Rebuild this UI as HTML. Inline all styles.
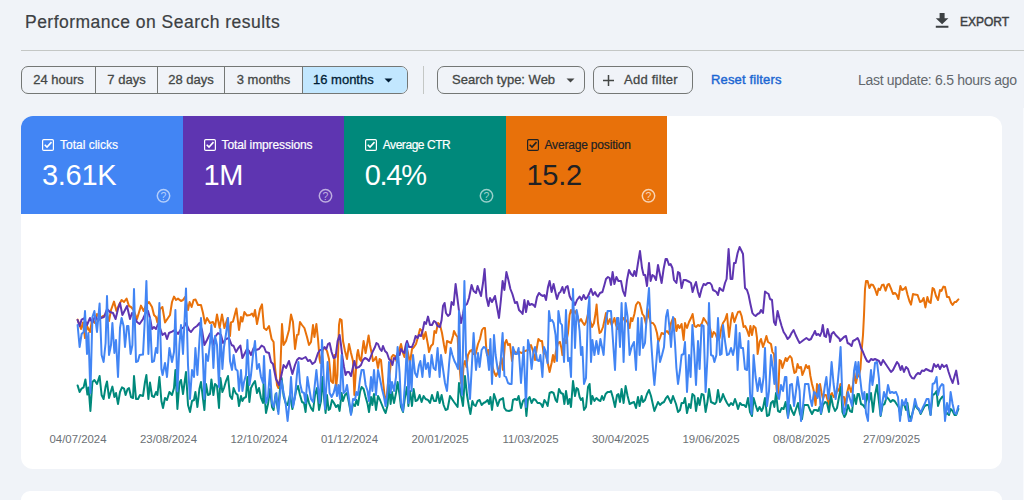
<!DOCTYPE html>
<html>
<head>
<meta charset="utf-8">
<title>Performance on Search results</title>
<style>
  html, body { margin: 0; padding: 0; }
  html { overflow: hidden; }
  body {
    width: 1024px; height: 500px; overflow: hidden; position: relative;
    background: #f0f3f8;
    font-family: "Liberation Sans", sans-serif;
    color: #3c4043;
  }
  .abs { position: absolute; white-space: nowrap; }
  #title { left: 25px; top: 11px; font-size: 17.5px; line-height: 22px; color: #3c4043; letter-spacing: 0.48px; -webkit-text-stroke: 0.2px #3c4043; }
  #export { left: 960px; top: 14px; font-size: 12px; line-height: 16px; color: #3c4043; -webkit-text-stroke: 0.45px #3c4043; letter-spacing: 0; }
  #exportIcon { left: 933px; top: 11px; }
  #divider { left: 21px; top: 50px; width: 1003px; height: 1px; background: #c4c7c5; }

  #seg { left: 21px; top: 66px; width: 387px; height: 28px; box-sizing: border-box;
         border: 1px solid #747775; border-radius: 7px; overflow: hidden; }
  #seg div { position: absolute; top: 0; height: 26px; line-height: 25px; font-size: 13px; color: #444746;
             text-align: center; border-left: 1px solid #747775; box-sizing: border-box; -webkit-text-stroke: 0.3px currentColor; }
  #seg div:first-child { border-left: none; }
  #seg .on { background: #c2e7ff; color: #001d35; }

  #vsep { left: 423px; top: 66px; width: 1px; height: 28px; background: #c4c7c5; }
  .chip { box-sizing: border-box; height: 28px; top: 66px; border: 1px solid #747775; border-radius: 7px;
          font-size: 13px; line-height: 25px; color: #444746; -webkit-text-stroke: 0.3px currentColor; }
  #reset { left: 711px; top: 72px; font-size: 13px; line-height: 16px; color: #1b66d2; -webkit-text-stroke: 0.4px #1b66d2; letter-spacing: 0.15px;}
  #last { left: 858px; top: 72px; font-size: 14px; line-height: 16px; color: #63686d; letter-spacing: -0.3px; }

  #card { left: 21px; top: 116px; width: 981px; height: 353px; background: #fff; border-radius: 12px; overflow: hidden; }
  #card2 { left: 21px; top: 491px; width: 981px; height: 9px; background: #fff; border-radius: 12px 12px 0 0; }
  .stat { position: absolute; top: 0; height: 98px; color: #fff; }
  .stat .cb { position: absolute; left: 21px; top: 23px; }
  .stat .lbl { position: absolute; left: 39px; top: 21px; font-size: 12px; line-height: 16px; white-space: nowrap; letter-spacing: 0; -webkit-text-stroke: 0.2px currentColor; }
  .stat .val { position: absolute; left: 21px; top: 42px; font-size: 29px; line-height: 34px; white-space: nowrap; letter-spacing: -0.3px; }
  .stat .help { position: absolute; left: 135px; top: 72px; }
  .xl { position: absolute; top: 432px; width: 80px; margin-left: -40px; text-align: center; font-size: 11.4px; line-height: 14px; color: #6b7075; white-space: nowrap; }
</style>
</head>
<body>
  <div id="title" class="abs">Performance on Search results</div>
  <svg id="exportIcon" class="abs" width="18" height="20" viewBox="0 0 18 20">
    <path d="M6.6 2.1h5v5.1h3.8l-6.3 6.1-6.3-6.1h3.8z M2.8 14.8h12.6v2H2.8z" fill="#3c4043"/>
  </svg>
  <div id="export" class="abs">EXPORT</div>
  <div id="divider" class="abs"></div>

  <div id="seg" class="abs">
    <div style="left:0;width:73px">24 hours</div>
    <div style="left:73px;width:62px">7 days</div>
    <div style="left:135px;width:67px">28 days</div>
    <div style="left:202px;width:78px">3 months</div>
    <div class="on" style="left:280px;width:105px;text-align:left;padding-left:10px">16 months
      <svg style="position:absolute;left:81px;top:11px" width="9" height="5" viewBox="0 0 9 5"><path d="M0.5 0.5h8l-4 4z" fill="#001d35"/></svg>
    </div>
  </div>
  <div id="vsep" class="abs"></div>

  <div class="abs chip" style="left:437px;width:148px;padding-left:14px">Search type: Web
    <svg style="position:absolute;left:128px;top:11px" width="9" height="5" viewBox="0 0 9 5"><path d="M0.5 0.5h8l-4 4z" fill="#444746"/></svg>
  </div>
  <div class="abs chip" style="left:593px;width:100px;padding-left:30px;letter-spacing:0.25px">Add filter
    <svg style="position:absolute;left:8px;top:7px" width="13" height="13" viewBox="0 0 13 13"><path d="M6.5 1v11M1 6.5h11" stroke="#444746" stroke-width="1.5" fill="none"/></svg>
  </div>
  <div id="reset" class="abs">Reset filters</div>
  <div id="last" class="abs">Last update: 6.5 hours ago</div>

  <div id="card" class="abs">
    <div class="stat" style="left:0;width:161.5px;background:#4285f4">
      <svg class="cb" width="12" height="12" viewBox="0 0 12 12"><rect x="0.6" y="0.6" width="10.8" height="10.8" rx="1.2" fill="none" stroke="#fff" stroke-width="1.2"/><path d="M2.7 5.7l2.3 2.3 4.5-4.9" fill="none" stroke="#fff" stroke-width="1.6"/></svg>
      <div class="lbl">Total clicks</div>
      <div class="val">3.61K</div>
      <svg class="help" width="15" height="15" viewBox="0 0 15 15"><circle cx="7.5" cy="7.8" r="6.2" fill="none" stroke="#fff" stroke-opacity="0.6" stroke-width="1.5"/><text x="7.5" y="11.6" font-size="10.5" font-family="Liberation Sans, sans-serif" text-anchor="middle" fill="#fff" fill-opacity="0.6">?</text></svg>
    </div>
    <div class="stat" style="left:161.5px;width:161.5px;background:#5e35b1">
      <svg class="cb" width="12" height="12" viewBox="0 0 12 12"><rect x="0.6" y="0.6" width="10.8" height="10.8" rx="1.2" fill="none" stroke="#fff" stroke-width="1.2"/><path d="M2.7 5.7l2.3 2.3 4.5-4.9" fill="none" stroke="#fff" stroke-width="1.6"/></svg>
      <div class="lbl" style="letter-spacing:-0.1px">Total impressions</div>
      <div class="val">1M</div>
      <svg class="help" width="15" height="15" viewBox="0 0 15 15"><circle cx="7.5" cy="7.8" r="6.2" fill="none" stroke="#fff" stroke-opacity="0.6" stroke-width="1.5"/><text x="7.5" y="11.6" font-size="10.5" font-family="Liberation Sans, sans-serif" text-anchor="middle" fill="#fff" fill-opacity="0.6">?</text></svg>
    </div>
    <div class="stat" style="left:322.75px;width:162px;background:#00897b">
      <svg class="cb" width="12" height="12" viewBox="0 0 12 12"><rect x="0.6" y="0.6" width="10.8" height="10.8" rx="1.2" fill="none" stroke="#fff" stroke-width="1.2"/><path d="M2.7 5.7l2.3 2.3 4.5-4.9" fill="none" stroke="#fff" stroke-width="1.6"/></svg>
      <div class="lbl" style="letter-spacing:-0.45px">Average CTR</div>
      <div class="val" style="letter-spacing:-1.3px">0.4%</div>
      <svg class="help" width="15" height="15" viewBox="0 0 15 15"><circle cx="7.5" cy="7.8" r="6.2" fill="none" stroke="#fff" stroke-opacity="0.6" stroke-width="1.5"/><text x="7.5" y="11.6" font-size="10.5" font-family="Liberation Sans, sans-serif" text-anchor="middle" fill="#fff" fill-opacity="0.6">?</text></svg>
    </div>
    <div class="stat" style="left:484.5px;width:161.5px;background:#e8710a;color:#202124">
      <svg class="cb" width="12" height="12" viewBox="0 0 12 12"><rect x="0.6" y="0.6" width="10.8" height="10.8" rx="1.2" fill="none" stroke="#202124" stroke-width="1.2"/><path d="M2.7 5.7l2.3 2.3 4.5-4.9" fill="none" stroke="#202124" stroke-width="1.6"/></svg>
      <div class="lbl" style="letter-spacing:-0.18px">Average position</div>
      <div class="val">15.2</div>
      <svg class="help" width="15" height="15" viewBox="0 0 15 15"><circle cx="7.5" cy="7.8" r="6.2" fill="none" stroke="#fff" stroke-opacity="0.7" stroke-width="1.5"/><text x="7.5" y="11.6" font-size="10.5" font-family="Liberation Sans, sans-serif" text-anchor="middle" fill="#fff" fill-opacity="0.7">?</text></svg>
    </div>
  </div>

  <!-- chart overlay in page coordinates -->
  <svg id="chart" class="abs" style="left:0;top:0" width="1024" height="500" viewBox="0 0 1024 500" fill="none" stroke-width="2" stroke-linejoin="round" stroke-linecap="round">
    <!--CURVES-->
    <path d="M77.6 319.6 L81 329 L83 322.4 L85 338 L87 326 L90 332 L92 320 L95 323 L97 314 L100 318 L103 316 L107 315 L109 321 L111 310 L114 301.6 L116.4 311 L119 305 L121.6 300 L124 302 L126.6 298.6 L129 306 L131 307 L133.6 310 L137 319 L141 305.6 L143.6 311 L146 305 L149 302 L152 307 L154 315 L156 317 L157.4 322.4 L160 309 L162.4 307 L165 322.4 L168 318 L170 315 L172 302 L174 296.6 L176 300 L178 298.6 L181 301 L183 300 L185 297 L188 310 L189.6 302 L191.6 307 L193.6 300 L195.6 299.6 L198 305 L201 305 L203 313 L205 323.6 L207 318 L210 323 L213 322 L215 327 L217 314.4 L219.6 328 L222 314.4 L224.4 328 L227.6 318 L230 336 L231 322.4 L233 321.6 L236.4 308.4 L239 330 L241 317 L242.4 321.6 L244.4 312 L247 315.6 L250 315 L252 313.6 L253.6 316.4 L255 310 L257 324 L260 309 L262 304.4 L264 328 L266.4 330 L269 326 L271.6 339 L273.6 342 L275 367 L277 385 L278.4 388 L280 379 L282 324 L283.6 345 L286 341 L289 330 L291 314.6 L293 322 L295 349 L297 335 L298.4 334.6 L300 322 L302 325 L304.4 328 L307 337 L309 345 L311 342 L313 325 L314.4 337 L316.4 324 L318 339 L319.6 359 L320.4 363 L323 349 L325 348 L327 351 L329 359 L331 381 L333 383 L334.4 355 L336 389 L337.4 375 L339 325 L340 319 L341.6 320 L343 341 L345 351 L347 359 L349 344 L351 353 L353 361 L354.4 395 L355.6 375 L357 355 L358 350 L359.6 359 L361 361 L363.6 341 L365.6 353 L367 345 L368.6 335.4 L370 345 L371.6 353 L373 361 L375 359 L376 357 L378 368 L379.6 359 L381 360 L383 381 L385 399 L386.4 400 L388 383 L390 371 L391.6 357 L393 355 L395 356 L396.4 361 L398 354 L401 344 L403 353 L404.4 357 L406 345 L408 353 L410 363 L412 349 L414 347 L416 344 L418 337 L420 329 L422 331 L423.6 339 L425.6 332 L428 345 L429 352 L431 346 L433 344 L434.4 331 L436 333 L438 323 L440 325 L442 333 L444 345 L445.6 353 L447 341 L449 342 L451 343 L453 336 L454 331 L456 335 L457.6 337 L459 361 L461 383 L462.4 385 L463.6 365 L465 361 L466.4 367 L468 355 L470 351 L472 350 L473 354 L475.6 354 L478 344 L480 339 L482 330 L483.6 328 L485 328 L486 345 L487 355 L488.4 350 L490 361 L492 365 L494 372 L496 376 L498 372 L500 365 L501.6 358 L503 370 L505 343 L506.4 340 L508 345 L510 344 L512 361 L513.6 350 L516 353 L519 352 L522 353 L525 351 L528 350 L531 345 L533 351 L535 360 L537 347 L538.4 339 L540.4 341 L542 341 L543.6 353 L545.6 354 L547.6 362 L549.6 372 L551.6 363 L553 355 L554.4 362 L556 351 L558 343 L560 342 L561.6 349 L562.4 355 L564 339 L566 343 L568 333 L569.6 315 L571 310 L573 314 L575 311 L577 315 L579 322 L581 319 L582.4 322 L584.4 325 L586 322 L588 314 L590 320 L592 327 L594 323 L595.6 313 L596.6 304.6 L598 323 L599.6 333 L601 332 L603 327 L605 318 L606 313 L608 324 L610 319 L611.6 325 L613 322 L614.4 318 L616 325 L617.6 329 L619.6 324 L621.6 322 L623.6 318 L625.6 320 L627.6 322 L629.6 328 L631 318 L632.4 321 L634.4 314 L636 305 L638 302 L639.6 303 L641 308 L642.4 314 L644 316 L646 324 L647.6 309 L649 317 L651 323 L653 323 L655 326 L657 333 L658.4 342 L660 338 L661.6 333 L663.6 334 L665.6 332 L667 331 L669 334 L671 323 L673 318 L673.6 318 L675 319 L676.4 331 L678 325 L679.6 328 L681.6 324 L683.6 340 L685 323 L687 328 L689 322 L691 318 L692.6 314 L694.4 326 L696 327 L698 325 L700 326 L702 323 L703.6 318 L705.6 321 L707.6 324 L710 328 L712 337 L713.6 332 L715.6 334 L717.6 340 L719.6 338 L721.6 327 L723 323 L725 320 L727 314 L729 337 L731 320 L732.4 313 L734.4 322 L736.4 316 L738 312 L740 311.6 L741.6 316 L743.6 327 L745.2 326 L747 330 L749 336 L750.4 326 L752 335 L753.6 326 L755.6 328 L757 338 L757.6 354 L759.6 342 L761 339 L763 347 L765 341 L766.4 336 L768 342 L769.6 343 L771 344 L772.4 352 L774 354 L775.6 375 L777 393 L778 398 L779.6 360 L781 361 L782.4 368 L784 363 L785.6 358 L787 361 L788.4 358 L790 356 L791.6 358 L793 366 L794.4 373 L796 372 L797.6 364 L799 368 L801 367 L802.4 375 L804.4 370 L806 365 L807.6 368 L809 366 L810.4 376 L812 384 L813.6 390 L815.6 405 L817 384 L818.4 396 L820 384 L821.6 393 L823 399 L824.4 395 L826 395 L827.6 400 L829 407 L830.4 395 L832 393 L833.6 397 L835.6 396 L837.6 389 L839 391 L840.4 384 L842 397 L844 397 L845.6 406 L847 393 L849 385 L851 392 L853 385 L854.4 373 L856 383 L857 378 L859 375 L860.4 369 L861.6 351 L863 335 L864 315 L865 289 L866 281 L867.6 281 L869.4 288 L871 284.6 L873 285 L875 289 L877 295 L878.6 288.6 L880 290 L882 285 L883.6 284.6 L885.6 290.6 L887.6 284.6 L889 284 L891 288.6 L893 294 L895 293 L896.6 294.6 L898.4 299 L900.4 286 L902 290 L904 289 L905.6 287 L907.6 295 L909.4 301 L911 304.6 L913 294 L915 294.6 L917.6 295 L920 302 L922 301 L923.6 298 L925.4 307.4 L927.4 297 L929 302 L930.6 303 L932.6 288 L934 289 L936 296 L938 300 L940 290 L941.4 291 L943.4 286.6 L945 287 L947 297 L949 297 L951 302.6 L952.6 305 L954.6 302 L956 302 L958.4 299.4" stroke="#e8710a"/>
    <path d="M77.6 385.4 L79.6 392 L81.6 388.6 L83.6 387.4 L85.4 379.4 L87.4 394.6 L88.6 387.4 L90.4 411 L92.4 382 L94.4 380 L97 384 L99.6 376 L101.6 395 L103.6 399 L105.6 386.6 L107 381.4 L109 398 L111 391 L112.4 386.6 L114.4 397 L116 393 L118 404 L120 392 L122 387.4 L124 388.6 L125.6 395 L127.6 389 L129 388 L131 397 L133 398 L134 376 L136 399 L138 399 L140 395 L143 396 L145 382 L146.4 375 L148.4 399 L150 382.6 L152 396 L154 397 L156 392 L157.4 395 L159.4 377 L161.4 401 L163 408 L165 398 L167 400 L169.4 392 L172 395 L174 388 L175.4 370 L177.4 409 L179.4 383 L181 380 L183 394 L186 372 L188 405 L190 412 L192 401 L194 400 L195.4 392 L197.4 407 L199.4 389 L201 382 L203 399 L204.4 410 L206 384 L208 395 L210 394 L211.4 379.4 L213.4 395 L215 384 L217 386 L219 408 L220.4 378 L222.4 392 L224 388 L226 381 L228 376 L230 396 L232 399 L233.6 388 L235.6 393 L237.6 395 L239 406 L241 396 L242.4 401 L244 398 L246 397 L247.4 377 L249.4 402 L251 388 L253 384 L255 381 L257 393 L259 388 L261 398 L263 403 L263.6 384 L266 413 L268 404 L270 389 L272 407 L273.6 410 L275.6 394 L278 411 L280 389 L281.6 378 L283.6 396 L285.6 403 L287.6 405 L290 395 L292.4 409 L294 401 L296 391 L298 386 L300 395 L302 402 L304 403 L305.6 412 L307 395 L309 403 L311 408 L313 411 L315 395 L317 388 L319 410 L321 401 L322.4 377 L324 397 L325.6 413 L327 395 L328.6 410 L330 409 L332 400 L334 403 L336 407 L338 405 L339.6 411 L341.6 393 L343 401 L345 395 L347 393 L349 403 L351 414 L353 404 L355 406 L356.4 400 L358 405 L360 392 L361.6 387 L363.6 389 L365.6 397 L367.6 404 L369 412 L371 397 L372.4 405 L374 394 L376 410 L378 396 L380 400 L382 405 L384 410 L385.6 413 L387.6 405 L389 385 L390.6 404 L392 392 L394 403 L396 393 L397.6 382 L399.6 395 L401 407 L403 412 L405 397 L407 387 L408.4 406 L410 391 L412 406 L413.6 389 L415.6 401 L417.6 400 L419.6 395 L421.6 402 L423.6 396 L425.6 399 L428 400 L430 403 L432 395 L434 401 L436 401 L437.6 392 L439.6 403 L441.6 395 L443.6 405 L445.6 410 L447.6 409 L450 396 L452 399 L454 402 L457.6 407 L459 383 L461 395 L463 406 L465 376 L467 395 L469 407 L470.4 414 L472.4 401 L474 405 L475.6 406 L477.6 401 L479.6 400 L481.6 405 L483.6 403 L485.6 402 L487.6 400 L489 404 L490.4 397 L492 410 L494 394 L496 400 L497.6 406 L499.6 400 L501.6 399 L503 398 L504.4 408 L506.4 410.6 L509 411 L511.6 410 L513 400 L515 399 L517 400 L518.6 396 L521 408 L523 401 L525 399 L526.4 416 L528 399 L529.6 397 L531.6 403 L533.6 399 L535.6 400 L537.6 403 L539.6 403 L541 404 L542.6 407 L544.4 400 L546.4 403 L547.6 406 L549.6 393 L551.6 392 L553.6 393 L555.6 400 L557 402 L559 389 L561 393 L563 394 L564.4 404 L566 391 L568 404 L569.6 399 L571 407 L573 381 L575 396 L576.6 388 L578 389 L579.6 397 L581 400 L582.6 398 L584 410 L586 407 L588 387 L589.6 384 L591 404 L592.4 396 L594.4 401 L596.4 398 L598.4 400 L600.4 401 L602 396 L603.6 400 L605.6 394 L607.6 392 L609.6 392 L611 391 L613 398 L615 407 L617 395 L618.4 394 L620 402 L621.6 389 L623.6 403 L625.6 386 L627.6 396 L629.6 404 L631.6 403 L634 402 L636 408 L638 397 L639.6 406 L641.6 396 L643 402 L645 400 L647 394 L649 390 L651 396 L653 405 L654.4 411 L656.4 406 L658 402 L660 405 L662 403 L664 402 L666 398 L667.6 396 L669.6 400 L671 403 L673 396 L676 404 L678 412 L680 410 L681.6 403 L683.6 403 L685 398 L687 413 L689 404 L690.6 408 L692.4 394 L694.4 396 L696 411 L698 398 L699.6 405 L701.6 394 L703.6 395 L705.6 412 L707.6 401 L709 389 L711 402 L713 403 L715 404 L716.4 402 L718 390 L720 402 L721.6 399 L723 394 L725 399 L727 403 L729 406 L731 403 L733 405 L735 399 L736.4 403 L738 409 L740 403 L742 405 L744 405 L746 407 L748 398 L750 412 L752 416 L753.6 398 L755.6 405 L757.6 411 L759.6 407 L761.6 411 L763 408 L765 398 L767 416 L769 415 L771 403 L773 401 L774.4 407 L776 393 L778 411 L780 412 L781.6 408 L783.6 409 L785.6 402 L788 417 L790 405 L792 411 L794 415 L796 409 L798 403 L800 414 L802 419 L804 405 L806 405 L808 405 L810 410 L812 414 L814 410 L816 410 L818 411 L819.6 407 L821 414 L823 405 L825 402 L827 403 L829 412 L831 396 L833 406 L835 411 L837 408 L839 397 L841 387 L842.4 412 L844.4 417 L846 414 L848 405 L850 411 L852 412 L854 395 L856 404 L857.6 394 L859 394 L861 404 L863 405 L865 408 L867 394 L869 402 L871 393 L873 412 L875 395 L877 385 L878.6 399 L880.6 416 L882.6 405 L884.6 404 L886.6 397 L888.6 399 L890.6 402 L892.6 400 L894.6 401 L896.6 404 L898.6 407 L900.6 415 L902 405 L904 404 L906 410 L907.4 403 L909 415 L911 419 L913 411 L915 405 L917 408 L919 410 L920.6 414 L922.6 410 L924.6 406 L926.6 405 L928.6 405 L930.6 415 L932.6 395 L934.6 394 L936.6 391 L938 406 L940 400 L942 397 L943.4 396 L945 415 L947 413 L949 415 L950.6 409 L952.6 411 L954.6 415 L956.2 415 L958.4 409" stroke="#00897b"/>
    <path d="M77.6 320 L79.6 326 L81.6 319.6 L84 318.4 L87 325 L90 318 L92.4 323 L95 316 L98 320.4 L101 318 L104 317 L107 309 L110 312 L113 313 L115.6 319 L118 309 L120 303 L122.4 315 L125 310 L127 306 L130 319 L132 313 L134 316 L137 322 L139.6 324 L143 319 L145.6 313 L148 311 L150 318 L152 329 L154 327 L156 329 L158 324 L160 328 L162.4 335 L165 333 L167 339 L169 333 L172 331.6 L175 330 L178 334 L181 329 L184 327 L186 323 L189 330 L191 332 L194 328 L197 326 L199.6 323 L202 330 L204.4 345 L207 340 L210 333.6 L213 345 L215 337 L218 333 L221 335 L223 343 L226 339 L229 338 L231.6 345 L233.6 346 L236 352 L238.4 348 L240.4 345.6 L242.4 358 L245 353 L247 349 L249 351 L251 355 L253.6 348 L256 350 L259 349 L261.6 345.6 L264 347 L266 352 L269 353 L271 362 L273 364 L276 379 L279 385 L281 377 L283.6 365 L286 368 L289 361 L292.4 374 L295 365 L297 360 L299 358 L302 359 L305.6 357 L308 361 L310 360 L312.4 364 L315 362 L318 353 L320 350 L322.4 350 L324.4 347 L326.4 349 L328 344 L329.6 343 L331.6 352 L333.6 358 L335.6 357 L337.6 341 L339.6 335 L341 345 L342.4 357 L344 367 L345.6 375 L347 372 L349 372 L351 376 L353 367 L354.4 361 L356 368 L359 367 L361 365 L363 360 L365 358 L367 359 L369 361 L371 356 L373 351 L375 347 L376.4 343 L378 344 L380 349 L381.6 351 L383 346 L385 351 L387 353 L389 359 L391 361 L392.4 365 L394 358 L395.6 359 L397.6 353 L399.6 355 L401 349 L403 352 L404.4 353 L406 344 L407 341 L409 347 L412 347 L414 342 L415.6 336 L417.6 338 L419 335 L421 336 L423 329 L424.4 322 L426 324 L428 316.6 L430 325 L432 325 L434 321 L435.6 322 L437.6 326 L440 327 L441.6 320 L443 306 L444.6 303 L446 313 L448 316 L450 314 L451.6 302 L453.6 305 L455.6 284 L457 295 L459 311 L461 323 L463 314 L464.4 306 L467 304 L469 298 L471.6 285 L473.6 291 L476 293 L477.6 286 L479.6 292 L481 296 L483 283 L484.6 269 L486.4 297 L488.4 306 L490 298 L492 302 L495 296 L497 307 L499 318 L501 299 L502.6 281 L504.4 290 L506.4 272 L508.4 280 L510.4 289 L512.4 294 L515 303 L517 302 L519 310 L521 312 L522.6 314 L524.4 300 L526 312 L528 301 L529.6 305 L531.6 304 L533.6 305 L535 307 L537 297 L539 293 L541 295 L543 296 L544.4 295 L546 300 L548 287 L549.6 281 L551.6 292 L553.6 284 L555.6 293 L557 299 L559 293 L560.4 292 L562.4 287 L564 293 L566 287 L567.6 286 L569.6 296 L571 299 L573 301 L575 305 L577 300 L579.6 296.6 L581.6 300 L583.6 295 L585.6 299 L587.6 297 L589.4 293 L591 289 L593 295 L595 292 L596.4 295 L598 296.6 L600 293 L602.4 292 L604.4 285 L606 279 L608 277 L609.6 278 L611 285 L612.6 272 L614.4 284 L616.4 277 L618.4 281 L621 281 L623 291 L625 296 L627 280 L629 270 L631 274 L633 276 L634.4 271 L636 276 L638 263 L640 251 L642 268 L643.6 275 L645.2 275 L647 286 L649 263 L650.6 281 L652.4 275 L654 276 L656 280 L658 265 L660 275 L661.6 283 L663.6 269 L665.6 259 L667 259 L669 265 L670.6 264 L672.4 268 L674 280 L676.4 283 L678 272 L679.6 273 L681.6 288 L683.6 280 L685.6 280 L687.6 281 L689.6 282 L691 283 L692.6 292 L694.4 286 L696 282 L698 292 L699.6 297 L701.6 289 L703.6 284 L705.6 285 L707.6 283 L710 283 L711.6 285 L713 290 L715 291 L716.4 292 L718 295 L719.6 288 L721.6 290 L723 291 L725 283 L726.6 279 L728.6 249 L730.6 279 L732.4 279 L734 263 L735.6 263 L737.6 253 L739.6 247 L741.6 251 L743 254 L745 288 L747 290 L748.6 295 L750.4 304 L752.4 313 L754 315 L755.6 316 L757.6 314 L759.6 313 L761 310 L763 313 L765 291.6 L767 293 L768.6 294 L770 299 L772 300 L774 322 L775.6 325 L777.6 311 L779.6 319 L781.6 326 L783.6 332 L785.6 335 L787.6 339 L789.6 337 L791.6 333 L793.6 330 L795.6 335 L798 340 L799.6 343 L801 342 L803.6 340 L806.4 338 L809 340 L811 339 L812.4 336 L813.6 334 L815 331 L816.4 335 L818.4 334 L820 336 L821.6 332 L822.8 325 L824.4 336 L826 337 L827.6 329 L829.6 337 L830 342 L831.6 334 L833.6 332 L835.6 335 L837.6 337 L839.6 339 L840 341 L842 339 L844 337 L846 336 L847.6 343 L849.6 344 L851.6 346 L853 341 L855 340 L857.6 338 L859 341 L861 348 L863 352 L865 357 L867 361 L869 362 L871 359 L873 360 L875 359 L877 360 L879 361 L881 365 L883 360 L885 363 L887 366 L889 369 L891 372 L893 370 L895 366 L897 362 L898.6 364 L900.6 370 L902 366 L904 372 L906 367 L908 369 L910 375 L912 378 L914 378.6 L916 375 L918 373 L920 374 L922 370.6 L924 371 L926 369 L928 370 L930 371 L932 371.4 L934 364 L936 367 L938 364.6 L940 369 L942 364.6 L944 367 L946.6 365 L948.6 372 L950.6 378 L952.6 383 L954.6 376 L956.2 370.6 L958.4 384" stroke="#5e35b1"/>
    <path d="M77.6 325 L79.6 347 L81.6 334 L83.6 332 L85 311 L87 354 L88.4 333 L90.4 393 L92.4 317 L94.4 311 L97 332 L99.6 303.6 L101.6 355 L103.6 362 L105.6 343 L107 296 L109 355 L111 345 L112.4 323 L114.4 353 L116 340 L118 377 L120 328 L121.6 318 L123.6 326 L125 347 L127 326 L128.4 326 L130.6 354 L132.4 345 L134 289 L136 362 L138 361 L139.6 355 L143 354.6 L145 316 L146.4 281 L148.4 354 L150 318 L152 362 L154 361 L156 348 L157.4 353 L159.4 303 L161.4 369 L162.6 375 L165 363 L167 377 L169.4 348 L172 362 L174 352 L175.4 310 L177.4 391 L179.4 345 L181 325 L183 354 L186 288.4 L188 365 L190 399 L192 370 L194 377 L195.4 348 L197.4 375 L199.4 341 L201 318 L203 361 L204.4 399 L206 354 L208 361 L210 343 L211.4 325 L213.4 368 L215 336 L217 345 L219 387 L220.4 329 L222.4 369 L224 347 L226 334 L228 318 L230 361 L232 370 L233.6 355 L235.6 369 L237.6 371 L239 391 L241 370 L242.4 391 L244 382 L246 375 L247.4 340 L249.4 385 L251 375 L253 355 L255 341 L257 369 L259 364 L261 377 L263 383 L264 356 L266 403 L268 397 L270 370 L272 403 L273.6 407 L276.4 393 L278.4 414 L280 395 L281.6 381 L283.6 393 L285.6 403 L287.6 421 L289.6 401 L291 377 L293 407 L295 397 L297 374 L298.4 362 L300 383 L302 392 L304 393 L305.6 403 L307.4 377 L309 387 L311 399 L313 402 L315 383 L316.4 370 L318 387 L319.6 403 L321 375 L322 340 L323.6 375 L325 409 L326.4 385 L327.6 362 L329.6 393 L331.6 397 L333.6 393 L335.6 385 L337 396 L338.4 385 L340 399 L341.6 355 L343.6 393 L345.6 391 L347 385 L349 399 L351 415 L353 399 L355 400 L356.4 392 L358 395 L360 379 L361.6 370 L363.6 370 L365.6 385 L367.6 391 L369 401 L371 377 L372.4 391 L374 370 L376 395 L378 370 L380 379 L382 389 L384 397 L385.6 406 L387.6 391 L389 362 L390.6 393 L392 382 L394 391 L396 377 L397.6 347 L399.6 373 L401 403 L403 411 L405 383 L407 344 L408.4 403 L410 361 L411.6 391 L413 355 L415 373 L417 377 L419 365 L420.4 361 L422.4 377 L424.4 355 L426 369 L428 363 L429.6 377 L431.6 355 L433.6 368 L435.6 370 L437.6 348 L439.6 377 L441 355 L443 369 L445 383 L447 391 L449 365 L450.6 348 L452.4 355 L454.4 361 L456 364 L458 369 L459 311 L460.4 365 L462 395 L464.4 281 L466 355 L468 375 L470 399 L472 363 L473.6 333 L475 355 L476 370 L478 353 L479.6 367 L481.6 350 L483.6 347 L485.6 348 L487.6 357 L489 370 L490.4 339 L492 384 L494 335 L495.6 355 L497.6 369 L499.6 377 L501.6 347 L502.6 333 L504.4 376 L506 377 L508 383 L510 384 L511.6 384 L513 347 L515 354 L517 354 L518.6 348 L521 383 L523.6 347 L526 407 L528 340 L529.6 347 L531.6 369 L533.6 351 L535 347 L537 360 L539 361 L540.4 355 L542.4 377 L544 347 L545.6 351 L547.6 363 L549 311 L550.4 321 L552 320 L553.6 323 L555.6 335 L557 361 L558.4 311 L560.4 323 L562 325 L564 362 L566 310 L568 361 L569.6 358 L571 377 L573 289 L575 348 L576.6 310 L578 317 L579.6 331 L581 355 L582.4 347 L584 384 L586 378 L588 311 L589.4 297 L591 362 L592.4 340 L594.4 355 L596.4 341 L598.4 354 L600.4 339 L602 347 L603.6 355 L605.6 323 L607.6 311 L609.6 311 L611 311 L613 341 L615 370 L617 318 L618.4 318 L620 347 L621.6 303 L623.6 362 L625.6 303 L627.6 317 L629.6 355 L631.6 347 L634 342 L636 370 L638 318 L639.6 355 L641.6 318 L643 348 L645 343 L647 311 L649 288 L651 339 L653 369 L654.4 385 L656.4 361 L658 341 L660 362 L662 355 L664 347 L666 317 L667.6 310 L669.6 329 L671 347 L673 317 L675 343 L676.4 368 L678 384 L680 370 L681.6 355 L683.6 354 L685 342 L687 392 L689 355 L690.6 377 L692.4 325 L694.4 355 L696 385 L698 341 L699.6 369 L701.6 325 L703.6 326 L705.6 392 L707.6 355 L709 303 L711 355 L713 356 L714.4 362 L716.4 355 L718 318 L720 355 L721.6 354 L723 325 L725 341 L727 355 L729 354 L731 348 L733 355 L734.4 348 L736 325 L737.6 370 L739.6 333 L741 348 L743 348 L745 369 L747 370 L748.4 341 L750 393 L751.6 414 L753.6 355 L755.6 377 L757.6 391 L759.6 378 L761.6 392 L763.6 377 L765 348 L767 406 L769 391 L771 355 L773 369 L774.4 384 L775.6 347 L777 393 L779 399 L781 385 L783 391 L785 377 L786.4 377 L788 418 L790 385 L792 384 L794 406 L796 391 L797.6 377 L799.6 391 L801 421 L803 406 L805 384 L807 384 L808.4 384 L810.4 399 L812 406 L814 392 L815.6 393 L817.6 398 L819 385 L821 413 L823 399 L825 385 L826.4 377 L828.4 399 L830 385 L831.6 362 L833.6 384 L835.6 399 L837.6 384 L839 369 L840.6 347 L842.4 399 L844 414 L846 406 L848 392 L850 399 L852 406 L854 371 L855.6 362 L857 378 L858.4 362 L860 377 L861.6 391 L863 399 L864.4 392 L866 413 L868 421 L869.6 385 L871 370 L872.4 385 L873.6 377 L875 363 L877 362 L879 379 L880.6 415 L882.6 401 L884 392 L886 399 L888 385 L890 393 L892 392 L894 393 L896 392 L898 397 L900 421 L902 400 L904 405 L906 399 L907.4 410 L909 421 L911 421 L913 411 L915 399 L917 407 L919 409 L920.6 413 L922.6 408 L924.6 404 L926.6 399 L928.6 399 L930.6 415 L932.6 384 L934.6 383 L936.6 377 L938 395 L940 387 L942 384 L943.4 385 L945 421 L947 403 L949 413 L950.6 392 L952.6 404 L954.6 413 L956.2 414 L958.4 406" stroke="#4285f4"/>
    <!--/CURVES-->
  </svg>

  <div class="xl" style="left:78px">04/07/2024</div>
  <div class="xl" style="left:168.5px">23/08/2024</div>
  <div class="xl" style="left:259px">12/10/2024</div>
  <div class="xl" style="left:349.5px">01/12/2024</div>
  <div class="xl" style="left:440px">20/01/2025</div>
  <div class="xl" style="left:530.5px">11/03/2025</div>
  <div class="xl" style="left:620.5px">30/04/2025</div>
  <div class="xl" style="left:711px">19/06/2025</div>
  <div class="xl" style="left:801.5px">08/08/2025</div>
  <div class="xl" style="left:891.5px">27/09/2025</div>

  <div id="card2" class="abs"></div>
  <div class="abs" style="left:1023px;top:108px;width:1px;height:392px;background:#f8fafd"></div>
</body>
</html>
